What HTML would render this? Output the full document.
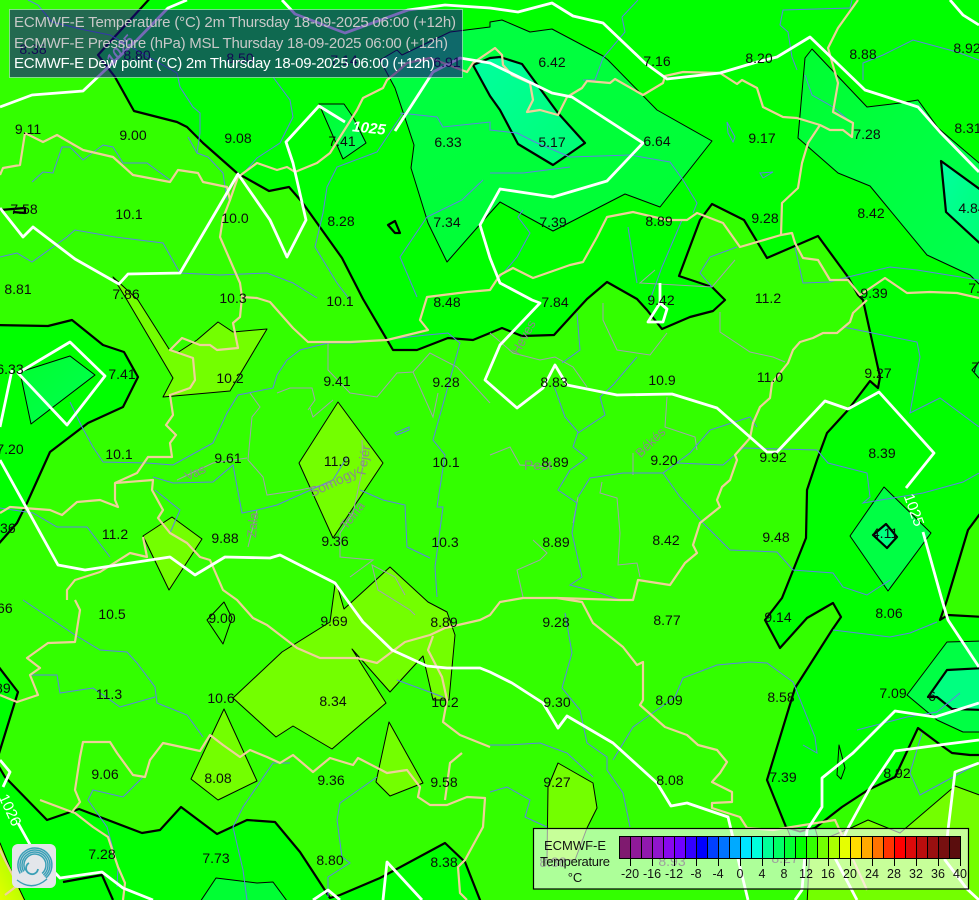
<!DOCTYPE html>
<html><head><meta charset="utf-8"><title>ECMWF-E map</title>
<style>html,body{margin:0;padding:0;background:#33ff00}svg{display:block}</style></head>
<body>
<svg width="979" height="900" viewBox="0 0 979 900" xmlns="http://www.w3.org/2000/svg" font-family="'Liberation Sans',sans-serif">
<defs>
<linearGradient id="g1" x1="0" y1="0" x2="0.6" y2="1"><stop offset="0" stop-color="#00ff44"/><stop offset="1" stop-color="#00ff33"/></linearGradient>
<linearGradient id="g2" x1="0" y1="0" x2="1" y2="1"><stop offset="0" stop-color="#00ffa0"/><stop offset="1" stop-color="#00ff70"/></linearGradient>
<linearGradient id="g3" x1="0" y1="0" x2="1" y2="1"><stop offset="0" stop-color="#00ff30"/><stop offset="1" stop-color="#00ff50"/></linearGradient>
<linearGradient id="g4" x1="1" y1="0" x2="0" y2="1"><stop offset="0" stop-color="#8cff00"/><stop offset="1" stop-color="#eeff00"/></linearGradient>
</defs>
<rect width="979" height="900" fill="#33ff00"/>

<!-- Fill regions -->
<g stroke="#000" stroke-linejoin="round">
<polygon fill="#00ff00" stroke-width="2.2" points="153,-5 985,-5 985,755 970,755 952,753 938,743 918,728 895,777 868,790 842,807 815,828 800,832 786,827 767,780 795,688 832,630 841,617 833,603 807,618 780,648 765,620 782,598 806,538 807,490 817,460 827,433 848,410 870,381 878,388 880,377 863,300 858,295 848,277 818,236 767,258 744,220 712,204 700,220 679,276 700,283 712,287 725,300 713,311 690,317 662,329 647,310 637,299 607,282 587,299 575,312 554,335 522,336 502,328 490,333 473,340 448,338 417,350 393,350 363,299 342,258 302,202 289,187 269,191 237,173 203,143 187,127 177,122 134,111 115,77 98,55"/>
<polygon fill="#00ff00" stroke-width="2.2" points="-5,325 48,326 72,320 103,345 124,352 138,377 123,407 88,423 50,452 27,503 17,523 -5,548"/>
<polygon fill="#00ff00" stroke-width="2.2" points="-5,662 18,692 -3,760 -5,760"/>
<polygon fill="#00ff00" stroke-width="2.2" points="-5,760 5,777 47,820 79,809 142,833 160,830 181,807 217,834 247,820 275,822 300,852 317,878 330,898 340,895 380,878 445,843 465,862 482,905 -5,905"/>
<polygon fill="#33ff00" stroke-width="2.2" points="985,507 968,530 947,600 940,620 948,615 985,617"/>
<!-- blue-green zones -->
<polygon fill="url(#g1)" stroke-width="1" points="380,60 397,50 402,55 450,32 490,27 490,22 502,20 530,32 552,29 603,56 608,60 657,110 712,141 660,207 625,194 553,231 500,202 490,213 447,262 428,223 411,168 414,145 395,88"/>
<polygon fill="url(#g2)" stroke-width="2.2" points="473,65 490,58 500,57 522,64 558,113 585,143 553,165 518,144 500,110 490,96"/>
<polygon fill="url(#g3)" stroke-width="1" points="319,104 344,104 353,117 366,143 343,159"/>
<polygon fill="url(#g3)" stroke-width="1" points="812,49 867,107 900,103 918,100 938,128 985,168 985,290 970,275 927,255 870,186 838,173 798,138 805,58"/>
<polygon fill="url(#g2)" stroke-width="2.2" points="941,161 946,212 985,248 985,193"/>
<polygon fill="url(#g3)" stroke-width="1" points="20,372 70,356 95,375 31,424"/>
<polygon fill="#00ff44" stroke-width="1" points="907,695 947,642 985,641 985,732 963,732 937,720"/>
<polygon fill="#00ff80" stroke-width="2.2" points="928,697 947,670 985,668 985,710 952,709 937,697"/>
<polygon fill="#00ff44" stroke-width="1" points="884,487 931,533 888,591 850,536"/>
<polygon fill="#00ff80" stroke-width="2.2" points="886,524 897,537 887,548 873,535"/>
<polygon fill="#00ff33" stroke-width="1" points="972,370 985,355 985,385"/>
<polygon fill="#00ff33" stroke-width="1" points="198,905 216,878 257,883 273,882 290,905"/>
<polygon fill="#00ff33" stroke-width="1" points="787,828 800,832 815,828 820,845 795,848"/>
<polygon fill="none" stroke-width="1" points="839,745 845,768 841,779 837,775"/>
<polygon fill="none" stroke-width="2.2" points="388,225 395,221 400,233 395,233"/>
<polyline fill="none" stroke-width="2.2" points="0,210 25,208 25,213 13,212"/>
<!-- light zones -->
<polygon fill="#73ff00" stroke-width="1" points="113,277 127,300 173,378 163,397 230,391 267,329 233,332 218,322 197,340 177,353 169,349 138,300"/>
<polygon fill="#73ff00" stroke-width="1" points="338,402 383,463 333,538 299,463"/>
<polygon fill="#73ff00" stroke-width="1" points="172,517 202,539 169,590 143,536"/>
<polygon fill="#33ff00" stroke-width="1" points="224,602 232,618 223,644 207,620"/>
<polygon fill="#73ff00" stroke-width="1" points="390,567 428,602 447,612 455,635 449,700 433,700 423,656 390,692 352,649 386,703 332,749 293,726 276,737 233,698 282,652 330,622 335,585 337,585 344,609"/>
<polygon fill="#73ff00" stroke-width="1" points="224,709 257,781 218,800 191,779"/>
<polygon fill="#73ff00" stroke-width="1" points="389,722 423,783 390,796 376,782"/>
<polygon fill="#73ff00" stroke-width="1" points="558,763 593,783 597,808 587,828 575,860 547,860 548,787"/>
<polygon fill="#73ff00" stroke-width="1" points="853,827 868,820 900,833 955,786 985,797 985,905 807,905 810,845"/>
<polygon fill="url(#g4)" stroke-width="1" points="-5,843 0,843 15,880 27,905 -5,905"/>
<polyline fill="none" stroke-width="2.2" points="63,882 102,875 113,900"/>
</g>

<!-- Gray lines -->
<g fill="none" stroke="#a2a2ae" stroke-width="1">
<polyline points="328,343 328,370 350,393 377,397 397,373 413,372 430,353 457,367 490,403"/>
<polyline points="310,408 313,417 333,400"/>
<polyline points="250,393 260,407 252,417 248,460 263,477 267,495 300,490 333,483"/>
<polyline points="277,393 290,388 312,388 315,400 308,410"/>
<polyline points="177,480 213,463 247,458"/>
<polyline points="248,547 257,510"/>
<polyline points="362,440 363,467 353,513 340,533 340,557 373,560 350,577"/>
<polyline points="413,372 433,417 438,393"/>
<polyline points="490,333 513,353 540,360 555,357 573,367 587,387"/>
<polyline points="603,303 603,320 617,350 650,355 667,333"/>
<polyline points="720,312 720,332 750,352 773,357 785,362"/>
<polyline points="667,397 665,427 695,437 697,450"/>
<polyline points="633,453 633,475"/>
<polyline points="490,455 510,447 520,465 553,467"/>
<polyline points="533,540 547,553 540,560 517,570 523,597"/>
<polyline points="602,482 600,493 617,498 620,533 618,565 637,563 640,577"/>
<polyline points="573,523 578,497"/>
<polyline points="655,270 640,283 712,287 735,260"/>
<polyline points="405,595 395,577 372,565 378,590 410,610 415,615"/>
</g>

<!-- Blue rivers -->
<g fill="none" stroke="#5f80e6" stroke-width="1">
<polyline points="177,73 180,87 193,107 200,113 200,133 197,153 208,157 223,173 227,200"/>
<polyline points="273,77 290,100 293,117 280,143 257,158 242,175"/>
<polyline points="32,182 43,172 53,173 62,147 70,147 83,160 103,145 113,147 123,163 147,163 170,180"/>
<polyline points="188,137 197,153"/>
<polyline points="0,257 17,253 32,262 67,237 75,230 115,237 163,243 180,273 220,275 267,273 293,283 317,298"/>
<polyline points="403,113 377,152 337,167 327,187 323,213 315,247 337,283 350,300"/>
<polyline points="400,113 437,117 443,127 490,122 490,130 517,133 537,143 570,157 630,155 670,162 683,180 697,203 693,213"/>
<polyline points="483,180 462,200 427,217 400,257 417,297"/>
<polyline points="638,0 622,17 625,32 603,58 595,80 583,80"/>
<polygon points="727,122 735,137 733,142 728,133"/>
<polygon points="760,173 773,172 763,178"/>
<polyline points="852,0 850,8 783,10 780,25 788,32 792,57 797,70"/>
<polyline points="863,80 863,63 883,55 913,40 957,52 979,60"/>
<polyline points="805,75 812,95 833,107 852,123"/>
<polyline points="490,173 523,173 570,167"/>
<polyline points="523,210 518,217 530,233 517,257 500,277"/>
<polyline points="737,247 710,257 700,273 712,287"/>
<polyline points="795,247 803,283 830,282 848,277 890,267 917,270 979,280"/>
<polyline points="628,227 637,283"/>
<polyline points="682,220 662,267 650,300"/>
<polyline points="353,343 328,343 300,350 287,360 277,375 273,388 238,395 227,413 213,443 173,465 147,463 103,462 93,447 82,427 70,402"/>
<polyline points="353,343 427,335 448,333 460,343 447,390 433,440 445,455 437,507 443,507 435,567 437,597"/>
<polyline points="153,477 173,483 213,482 233,465 242,513 257,510 277,505 333,480 347,457"/>
<polyline points="360,490 383,500 405,505 407,547 430,558"/>
<polyline points="0,508 33,513 57,527 87,527 110,557"/>
<polyline points="155,490 180,510 170,533"/>
<polyline points="553,383 565,417 578,432 573,447 587,458 570,470 558,490 577,503 572,533 582,577 570,585 600,593 620,600"/>
<polyline points="578,497 590,478 623,473 663,473 690,453 710,430 750,417 757,427"/>
<polyline points="663,473 680,497 703,523 730,550 777,552 793,570 833,573 843,587 867,595 890,580"/>
<polyline points="677,463 723,465 743,448 817,450 828,463 867,473 870,497 863,503 923,493 963,482 979,473"/>
<polyline points="843,327 917,342 920,357 910,413 940,398 979,427"/>
<polyline points="577,313 580,350 562,363"/>
<polyline points="637,357 613,385 600,397 605,415 578,433"/>
<polyline points="565,613 572,653 562,688 580,710 587,743 607,757 607,770 623,793 630,827"/>
<polyline points="613,760 633,727 675,697 683,678 717,665 750,662 767,663 793,682 815,737 817,753 803,745"/>
<polyline points="490,745 507,745 540,743 567,753 593,777"/>
<polyline points="490,792 507,787 530,800 525,817 547,827"/>
<polyline points="833,630 890,637 910,633 937,622"/>
<polyline points="857,730 907,717 937,712 960,693"/>
<polyline points="922,733 910,773 920,795 979,763"/>
<polyline points="23,600 75,635 100,650 127,652 137,663 155,687 157,703 187,715 203,737"/>
<polyline points="30,675 57,675 60,693 93,688 120,707 155,697"/>
<polyline points="143,777 123,797 93,790 88,800 107,827 118,867 117,887"/>
<polyline points="290,763 273,763 243,807 233,827 243,870 247,900"/>
<polyline points="377,777 340,803 337,820 342,857 350,863 328,877 328,897"/>
<polyline points="397,680 443,697"/>
<polyline points="28,0 38,5 52,22 85,30 110,35 177,73"/>
<polygon points="395,433 409,427 409,430 397,435"/>
</g>

<!-- Tan borders -->
<g fill="none" stroke="#efd09a" stroke-width="2.2" stroke-linejoin="round">
<polyline points="0,175 3,168 20,165 25,133 43,142 57,135 83,150 113,157 133,175 170,182 178,170 198,173 203,182 227,187 230,200 238,177 257,163 277,170 287,167 295,172 317,163 330,153 357,110 363,98 383,88 387,80 397,72 407,63 430,58 467,72 473,63 495,48 502,55 503,65 512,75 530,83 533,100 527,112 540,110 558,115 567,97 582,88 587,81 610,83 615,79 643,95 663,83 665,76 683,72 720,73 737,84 742,80 757,88 763,107 783,117 797,118 820,125 830,130 843,130 852,137 853,123 833,112 838,83 828,48 838,28 858,0"/>
<polyline points="820,125 808,143 802,163 798,188 782,203 781,235 740,247 723,223 697,213 687,220 667,220 633,212 607,217 597,237 583,262 570,265 533,278 513,268 500,275 490,290 467,292 427,297 420,320 428,330 387,340 350,342 308,342 293,328 270,302 257,298 242,297"/>
<polyline points="781,235 792,233 795,243 803,258 818,260 830,280 848,280 860,295 885,278 907,293 930,292 957,293 979,298"/>
<polyline points="230,200 223,218 220,237 230,260 240,283 242,297 240,317 233,323 238,348 217,350 210,345 200,345 182,338 170,350 193,358 195,380 190,388 170,395 173,415 166,425 176,435 170,443 172,457 148,457 137,473 115,483 115,500 118,507 100,500 77,502 62,515 50,510 10,507 0,513"/>
<polyline points="115,483 153,480 152,490 163,510 158,518 170,533 187,543 200,557 210,560 223,590 237,600 253,618 267,625 297,648 320,658 357,658 377,663 405,642 430,635 445,628 480,620 490,615 500,602 523,598 557,598 582,602 593,623 623,647 637,665 643,662 643,700 640,705 665,727 687,735 698,745 717,750 727,762 720,773 712,782 732,792 732,802 712,803 712,808 740,817 747,828 773,830 835,820 867,890"/>
<polyline points="557,598 620,600 633,600 638,580 670,585 685,563 697,553 693,545 700,523 720,507 717,500 722,487 730,480 737,460 735,455 750,438 753,423 760,407 770,398 772,383 788,363 793,350 800,342 813,338 823,333 837,333 850,322 853,313 867,300"/>
<polyline points="143,537 147,557 130,553 100,572 75,580 67,590 67,600"/>
<polyline points="75,600 80,610 75,642 48,643 27,658 40,668 30,675 38,695 17,702 0,695"/>
<polyline points="123,900 125,883 118,867 108,837 93,827 75,813 72,812 80,802 75,790 80,757 83,742 110,742 117,753 133,775 145,777 150,760 163,743 200,751 210,735 223,745 240,757 250,750 267,757 280,763 293,755 313,772 330,758 353,765 358,758 387,773 407,770 420,787 418,797 430,805 447,805 467,797 485,798 483,827 465,860 458,867 460,893 467,900"/>
<polyline points="433,636 428,650 442,677 447,700 443,722 460,735 490,747"/>
<polyline points="462,753 450,763 445,800"/>
<polyline points="0,850 10,870 18,885 5,895"/>
<polyline points="72,812 40,800"/>
</g>

<!-- White isobars -->
<g fill="none" stroke="#fff" stroke-width="2.8" stroke-linejoin="round" stroke-linecap="butt">
<polyline points="0,107 32,95 83,91 137,40 168,8 187,0"/>
<polyline points="282,0 295,14 345,33 408,10 445,5 490,8 518,12 552,3 573,16 603,23 645,63 667,79 720,73 757,62 777,57 810,37 865,90 918,107 940,132 979,172"/>
<polyline points="395,131 433,72 460,58 490,63 552,93 572,97 643,143 607,181 553,197 500,189 480,225 490,258 500,283 532,300 540,303 500,345 485,380 517,408 543,388 555,365 567,385 617,395 672,394 717,408 767,452 777,452 825,401 848,409 879,392 934,453 906,488"/>
<polyline points="345,122 319,106 286,142 293,163 306,220 287,257 270,220 238,174 180,273 128,274 119,284 75,259 33,227 23,237 0,208"/>
<polygon points="18,373 70,342 105,376 67,425"/>
<polyline points="12,370 0,427"/>
<polyline points="0,460 58,565 85,570 170,557 195,575 225,557 270,558 280,555 335,583 347,600 363,622 392,650 427,666 447,668 480,668 490,672 512,683 543,703 558,728 567,716 613,743 657,783 671,806 687,803 728,817 748,900"/>
<polyline points="979,703 935,717 895,711 853,753 822,778 822,807 807,830 802,890 795,900"/>
<polyline points="979,740 947,744 895,751 870,788 847,830 835,858 857,900"/>
<polyline points="979,763 955,772 948,830 945,860 967,889 979,900"/>
<polyline points="950,0 963,15 979,25"/>
<polyline points="923,532 942,600 948,620 979,667"/>
<polyline points="0,760 10,772 3,787"/>
<polyline points="18,823 33,850 60,878 102,872 123,888 153,900"/>
<polyline points="313,900 328,890 340,900"/>
<polyline points="383,900 387,862 422,900"/>
<polygon points="660,303 667,309 663,322 648,322"/>
<polyline points="660,283 660,303"/>
</g>

<!-- Contour labels -->
<g fill="#fff" font-size="15" font-weight="bold" font-style="italic" text-anchor="middle">
<text x="369" y="133" transform="rotate(6 369 128)">1025</text>
<text x="120" y="55" transform="rotate(-48 120 50)">1025</text>
<text x="914" y="515" font-weight="normal" font-style="normal" transform="rotate(70 914 510)">1025</text>
<text x="10" y="815" font-weight="normal" font-style="normal" transform="rotate(65 10 810)">1026</text>
</g>

<!-- Region names -->
<g fill="#8a8a8a" font-size="13" text-anchor="middle">
<text x="195" y="477" transform="rotate(-25 195 472)">Vas</text>
<text x="333" y="487" font-size="14" transform="rotate(-25 333 482)">Somogy</text>
<text x="363" y="465" transform="rotate(-80 363 460)">Fejér</text>
<text x="352" y="520" transform="rotate(-52 352 515)">Tolna</text>
<text x="252" y="530" transform="rotate(-85 252 525)">Zala</text>
<text x="538" y="470" font-size="14">Pest</text>
<text x="650" y="447" transform="rotate(-45 650 442)">Békés</text>
<text x="523" y="342" transform="rotate(-62 523 337)">Heves</text>
</g>

<!-- Value labels -->
<g fill="#0c0c0c" font-size="14" text-anchor="middle">
<text x="33" y="54">8.38</text><text x="137" y="60">8.80</text><text x="240" y="63">8.50</text><text x="344" y="65">7.14</text><text x="447" y="67">6.91</text>
<text x="552" y="67">6.42</text><text x="657" y="66">7.16</text><text x="759" y="63">8.20</text><text x="863" y="59">8.88</text><text x="967" y="53">8.92</text>
<text x="28" y="134">9.11</text><text x="133" y="140">9.00</text><text x="238" y="143">9.08</text><text x="342" y="146">7.41</text><text x="448" y="147">6.33</text><text x="552" y="147">5.17</text><text x="657" y="146">6.64</text><text x="762" y="143">9.17</text><text x="867" y="139">7.28</text><text x="968" y="133">8.31</text>
<text x="24" y="214">7.58</text><text x="129" y="219">10.1</text><text x="235" y="223">10.0</text><text x="341" y="226">8.28</text><text x="447" y="227">7.34</text><text x="553" y="227">7.39</text><text x="659" y="226">8.89</text><text x="765" y="223">9.28</text><text x="871" y="218">8.42</text><text x="972" y="213">4.84</text>
<text x="18" y="294">8.81</text><text x="126" y="299">7.86</text><text x="233" y="303">10.3</text><text x="340" y="306">10.1</text><text x="447" y="307">8.48</text><text x="555" y="307">7.84</text><text x="661" y="305">9.42</text><text x="768" y="303">11.2</text><text x="874" y="298">9.39</text><text x="978" y="293">7.7</text>
<text x="10" y="374">6.33</text><text x="122" y="379">7.41</text><text x="230" y="383">10.2</text><text x="337" y="386">9.41</text><text x="446" y="387">9.28</text><text x="554" y="387">8.83</text><text x="662" y="385">10.9</text><text x="770" y="382">11.0</text><text x="878" y="378">9.27</text><text x="985" y="372">7.41</text>
<text x="10" y="454">7.20</text><text x="119" y="459">10.1</text><text x="228" y="463">9.61</text><text x="337" y="466">11.9</text><text x="446" y="467">10.1</text><text x="555" y="467">8.89</text><text x="664" y="465">9.20</text><text x="773" y="462">9.92</text><text x="882" y="458">8.39</text>
<text x="2" y="533">8.36</text><text x="115" y="539">11.2</text><text x="225" y="543">9.88</text><text x="335" y="546">9.36</text><text x="445" y="547">10.3</text><text x="556" y="547">8.89</text><text x="666" y="545">8.42</text><text x="776" y="542">9.48</text><text x="885" y="538">4.11</text>
<text x="-1" y="613">7.66</text><text x="112" y="619">10.5</text><text x="222" y="623">9.00</text><text x="334" y="626">9.69</text><text x="444" y="627">8.89</text><text x="556" y="627">9.28</text><text x="667" y="625">8.77</text><text x="778" y="622">9.14</text><text x="889" y="618">8.06</text>
<text x="-3" y="693">8.89</text><text x="109" y="699">11.3</text><text x="221" y="703">10.6</text><text x="333" y="706">8.34</text><text x="445" y="707">10.2</text><text x="557" y="707">9.30</text><text x="669" y="705">8.09</text><text x="781" y="702">8.58</text><text x="893" y="698">7.09</text><text x="932" y="701">6</text>
<text x="105" y="779">9.06</text><text x="218" y="783">8.08</text><text x="331" y="785">9.36</text><text x="444" y="787">9.58</text><text x="557" y="787">9.27</text><text x="670" y="785">8.08</text><text x="783" y="782">7.39</text><text x="897" y="778">8.92</text>
<text x="102" y="859">7.28</text><text x="216" y="863">7.73</text><text x="330" y="865">8.80</text><text x="444" y="867">8.38</text><text x="553" y="867">8.38</text><text x="672" y="866">8.93</text><text x="785" y="863">8.27</text>
</g>

<!-- Top overlay -->
<rect x="9.5" y="9.5" width="453" height="68" fill="rgba(25,5,133,.6)" stroke="rgba(210,255,225,.55)" stroke-width="1"/>
<g font-size="15">
<text x="14" y="27" fill="#c8c8c8" textLength="442">ECMWF-E Temperature (°C) 2m Thursday 18-09-2025 06:00 (+12h)</text>
<text x="14" y="48" fill="#c8c8c8" textLength="434">ECMWF-E Pressure (hPa) MSL Thursday 18-09-2025 06:00 (+12h)</text>
<text x="14" y="68" fill="#fff" textLength="421">ECMWF-E Dew point (°C) 2m Thursday 18-09-2025 06:00 (+12h)</text>
</g>

<!-- Legend -->
<rect x="533.5" y="828.5" width="435" height="60.5" fill="rgba(255,255,255,.6)" stroke="#000" stroke-width="1.2"/>
<g fill="#111" font-size="13" text-anchor="middle">
<text x="575" y="850">ECMWF-E</text>
<text x="575" y="866" textLength="70">Temperature</text>
<text x="575" y="882">°C</text>
</g>
<g stroke="#000" stroke-width="1">
<rect x="619.5" y="836.5" width="11" height="22" fill="#7f1a6f"/><rect x="630.5" y="836.5" width="11" height="22" fill="#8f1a99"/><rect x="641.5" y="836.5" width="11" height="22" fill="#9119ae"/><rect x="652.5" y="836.5" width="11" height="22" fill="#9015cc"/><rect x="663.5" y="836.5" width="11" height="22" fill="#8808ee"/><rect x="674.5" y="836.5" width="11" height="22" fill="#7000ff"/><rect x="685.5" y="836.5" width="11" height="22" fill="#3300ff"/><rect x="696.5" y="836.5" width="11" height="22" fill="#0000ff"/><rect x="707.5" y="836.5" width="11" height="22" fill="#0040ff"/><rect x="718.5" y="836.5" width="11" height="22" fill="#0073ff"/><rect x="729.5" y="836.5" width="11" height="22" fill="#00aaff"/><rect x="740.5" y="836.5" width="11" height="22" fill="#00e6ff"/><rect x="751.5" y="836.5" width="11" height="22" fill="#00ffdd"/><rect x="762.5" y="836.5" width="11" height="22" fill="#00ff99"/><rect x="773.5" y="836.5" width="11" height="22" fill="#00ff66"/><rect x="784.5" y="836.5" width="11" height="22" fill="#00ff33"/><rect x="795.5" y="836.5" width="11" height="22" fill="#00ff00"/><rect x="806.5" y="836.5" width="11" height="22" fill="#33ff00"/><rect x="817.5" y="836.5" width="11" height="22" fill="#73ff00"/><rect x="828.5" y="836.5" width="11" height="22" fill="#aaff00"/><rect x="839.5" y="836.5" width="11" height="22" fill="#e6ff00"/><rect x="850.5" y="836.5" width="11" height="22" fill="#ffdd00"/><rect x="861.5" y="836.5" width="11" height="22" fill="#ffaa00"/><rect x="872.5" y="836.5" width="11" height="22" fill="#ff7300"/><rect x="883.5" y="836.5" width="11" height="22" fill="#ff3300"/><rect x="894.5" y="836.5" width="11" height="22" fill="#ff0000"/><rect x="905.5" y="836.5" width="11" height="22" fill="#dd0a0a"/><rect x="916.5" y="836.5" width="11" height="22" fill="#bb0d0d"/><rect x="927.5" y="836.5" width="11" height="22" fill="#991010"/><rect x="938.5" y="836.5" width="11" height="22" fill="#771010"/><rect x="949.5" y="836.5" width="11" height="22" fill="#5a0d0d"/>
<path d="M630.5 858v8M652.5 858v8M674.5 858v8M696.5 858v8M718.5 858v8M740.5 858v8M762.5 858v8M784.5 858v8M806.5 858v8M828.5 858v8M850.5 858v8M872.5 858v8M894.5 858v8M916.5 858v8M938.5 858v8M960.5 858v8" fill="none"/>
</g>
<g fill="#111" font-size="12.5" text-anchor="middle">
<text x="630" y="878">-20</text><text x="652" y="878">-16</text><text x="674" y="878">-12</text><text x="696" y="878">-8</text><text x="718" y="878">-4</text><text x="740" y="878">0</text><text x="762" y="878">4</text><text x="784" y="878">8</text><text x="806" y="878">12</text><text x="828" y="878">16</text><text x="850" y="878">20</text><text x="872" y="878">24</text><text x="894" y="878">28</text><text x="916" y="878">32</text><text x="938" y="878">36</text><text x="960" y="878">40</text>
</g>

<!-- Logo -->
<rect x="12" y="844" width="44" height="44" rx="6" fill="#e3e6ea"/>
<g fill="none" stroke="#3a9fb6" stroke-width="1.5">
<path d="M20.2 873.5A17 17 0 1 1 45.9 878"/>
<path d="M22 872.5A15 15 0 1 1 44.6 876.5"/>
<path d="M23.7 871.5A13 13 0 1 1 43.4 875"/>
<path d="M25.4 870.5A11 11 0 1 1 42.1 873.4"/>
<path d="M17 880Q32 892 47 879" stroke-width="1.4"/>
<path d="M29 863A6 6 0 1 0 38 869" stroke-width="1.8"/>
</g>
</svg>
</body></html>
